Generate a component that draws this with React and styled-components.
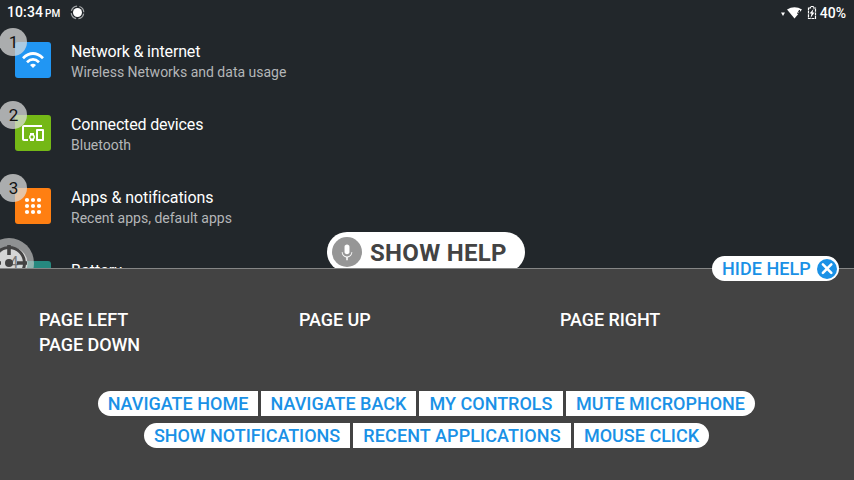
import React from "react";
import styled, { createGlobalStyle } from "styled-components";

const Global = createGlobalStyle`
  * { box-sizing: border-box; }
  body { margin: 0; background: #22272b; font-family: Roboto, sans-serif; overflow: hidden; }
  svg { display: block; }
`;

const Screen = styled.div`
  position: relative;
  width: 854px;
  height: 480px;
  display: flex;
  flex-direction: column;
  background: #22272b;
  color: #fff;
  overflow: hidden;
`;

const StatusBar = styled.header`
  height: 24px;
  flex: none;
  display: flex;
  align-items: center;
  justify-content: space-between;
  padding: 1px 8px 0 7px;
  font-size: 14px;
  font-weight: 500;
  line-height: 24px;
`;

const StatusGroup = styled.div`
  display: flex;
  align-items: center;
`;

const Clock = styled.span`
  margin-right: 10px;
  letter-spacing: 0.1px;
`;

const Meridiem = styled.span`
  font-size: 10px;
  margin-left: 2px;
`;

const Percent = styled.span`
  margin-left: 2px;
`;

const Settings = styled.main`
  height: 244px;
  flex: none;
  overflow: hidden;
`;

const SettingRow = styled.div`
  height: 73px;
  display: flex;
  padding: 18px 0 0 15px;
`;

const Tile = styled.div`
  position: relative;
  width: 36px;
  height: 36px;
  border-radius: 3px;
  background: ${(p) => p.$color};
  display: flex;
  align-items: center;
  justify-content: center;
`;

const Badge = styled.span`
  position: absolute;
  left: -16px;
  top: -14px;
  width: 28px;
  height: 28px;
  border-radius: 50%;
  background: rgba(220, 220, 220, 0.74);
  color: #111;
  font-size: 17px;
  line-height: 28px;
  text-align: center;
  padding-left: 1px;
`;

const RowText = styled.div`
  margin-left: 20px;
`;

const RowTitle = styled.div`
  font-size: 16px;
  line-height: 20px;
  letter-spacing: ${(p) => p.$tracking}px;
`;

const RowDetail = styled.div`
  font-size: 14px;
  line-height: 20px;
  color: #b4b6b8;
`;

const TargetBadge = styled.div`
  position: absolute;
  left: -31px;
  top: -23px;
`;

const ShowHelp = styled.button`
  position: absolute;
  left: 327px;
  top: 232px;
  width: 198px;
  height: 40px;
  border: 0;
  border-radius: 20px;
  background: #fff;
  color: #434343;
  display: flex;
  align-items: center;
  padding: 0 0 0 5px;
  font: 700 24px/40px Roboto, sans-serif;
  letter-spacing: 0.3px;
  white-space: nowrap;
`;

const ShowHelpLabel = styled.span`
  padding-top: 2px;
`;

const MicDisc = styled.span`
  width: 30px;
  height: 30px;
  border-radius: 50%;
  background: #969696;
  margin-right: 8px;
  display: flex;
  align-items: center;
  justify-content: center;
`;

const HelpPanel = styled.section`
  position: relative;
  flex: 1;
  border-top: 1px solid #858686;
  background: #434343;
  display: flex;
  flex-direction: column;
`;

const HideHelp = styled.button`
  position: absolute;
  left: 712px;
  top: -13px;
  width: 127px;
  height: 25px;
  border: 0;
  border-radius: 13px;
  background: #fff;
  color: #1a91e6;
  display: flex;
  align-items: center;
  justify-content: space-between;
  padding: 0 2px 0 10px;
  font: 500 18px/25px Roboto, sans-serif;
  letter-spacing: 0.05px;
  white-space: nowrap;
`;

const Commands = styled.div`
  display: grid;
  grid-template-columns: 260px 261px 1fr;
  grid-auto-rows: 25px;
  padding: 38px 0 0 39px;
  height: 122px;
  font-size: 18px;
  font-weight: 500;
  line-height: 26px;
  letter-spacing: -0.08px;
`;

const ActionRow = styled.div`
  display: flex;
  justify-content: center;
  gap: 3px;
  margin-bottom: 7px;
  padding-right: 1px;
`;

const Action = styled.button`
  width: ${(p) => p.$width}px;
  height: 25px;
  border: 0;
  padding: 0;
  background: #fff;
  color: #1a91e6;
  font: 500 18px/25px Roboto, sans-serif;
  letter-spacing: ${(p) => p.$tracking || 0}px;
  text-align: center;
  white-space: nowrap;
  &:first-child { border-radius: 13px 0 0 13px; }
  &:last-child { border-radius: 0 13px 13px 0; }
`;

const WifiIcon = () => (
  <svg width="24" height="24" viewBox="0 0 24 24" fill="none" stroke="#fff" strokeWidth="2.800">
    <path d="M2 10.200Q12 .9 22 10.200M6 14.200Q12 8.600 18 14.200" />
    <path d="M9 17q3-2.700 6 0l-3 3z" fill="#fff" stroke="none" />
  </svg>
);

const DevicesIcon = () => (
  <svg width="24" height="24" viewBox="0 0 24 24" fill="#fff">
    <path d="M3 6h18V4H3c-1.1 0-2 .9-2 2v12c0 1.100.9 2 2 2h4v-2H3V6zm10 6H9v1.780c-.61.55-1 1.330-1 2.220s.39 1.670 1 2.220V20h4v-1.780c.61-.55 1-1.340 1-2.220s-.39-1.670-1-2.220V12zm-2 5.500c-.83 0-1.500-.67-1.500-1.500s.67-1.500 1.500-1.500 1.500.67 1.500 1.500-.67 1.500-1.500 1.500zM22 8h-6c-.5 0-1 .5-1 1v10c0 .5.5 1 1 1h6c.5 0 1-.5 1-1V9c0-.5-.5-1-1-1zm-1 10h-4v-8h4v8z" />
  </svg>
);

const AppsIcon = () => (
  <svg width="24" height="24" viewBox="0 0 24 24" fill="#fff">
    {[6, 12, 18].map((y) => [6, 12, 18].map((x) => <circle key={x + "-" + y} cx={x} cy={y} r="2.100" />))}
  </svg>
);

const TargetIcon = () => (
  <svg width="50" height="50" viewBox="0 0 50 50">
    <circle cx="25" cy="25" r="25" fill="#c8c8c8" fillOpacity="0.66" />
    <circle cx="28" cy="25" r="15.500" fill="#e2e2e2" fillOpacity="0.85" />
    <text x="25.500" y="30" fill="#777" fontSize="16" fontFamily="Roboto">4</text>
    <circle cx="25" cy="25" r="15.500" fill="none" stroke="#434343" strokeWidth="3" />
    <path d="M25 7v10M25 33v10M7 25h10M33 25h10" stroke="#434343" strokeWidth="3.600" />
    <circle cx="25" cy="25" r="4" fill="#434343" />
  </svg>
);

const RecordIcon = () => (
  <svg width="15" height="15" viewBox="0 0 15 15" fill="none">
    <circle cx="7.500" cy="7.500" r="6.300" stroke="#a2a5a7" strokeWidth="1.200" strokeDasharray="7.500 2.396" strokeDashoffset="-1.200" />
    <circle cx="7.500" cy="7.500" r="4.500" fill="#fff" />
  </svg>
);

const SignalIcons = () => (
  <svg width="37" height="16" viewBox="0 0 37 16">
    <path d="M0 7.500h4L2 11z" fill="#fff" />
    <path d="M6 4.500Q13.500-.2 21 4.500L13.500 13.500z" fill="#fff" />
    <path d="M18.500 5l-2 3.500h3.500M18.500 5v6" stroke="#22272b" strokeWidth=".9" fill="none" />
    <path d="M27.500 3h2V1.500h3V3h2v10.500h-7z" fill="none" stroke="#fff" strokeWidth="1.200" strokeDasharray="3 .6" />
    <path d="M32.500 4l-4 4.500h2l-1 4.500 4-5.500h-2z" fill="#fff" />
  </svg>
);

const MicIcon = () => (
  <svg width="18" height="18" viewBox="0 0 24 24" fill="#fff">
    <path d="M12 15c1.900 0 3.300-1.340 3.300-3V5c0-1.660-1.400-3-3.300-3S8.700 3.340 8.700 5v7c0 1.660 1.400 3 3.300 3zm6-3c0 3.310-2.690 6-6 6s-6-2.690-6-6H5c0 3.800 2.600 6.700 6 7.200V23h2v-3.800c3.400-.5 6-3.400 6-7.200z" />
  </svg>
);

const CloseIcon = () => (
  <svg width="20" height="20" viewBox="0 0 20 20">
    <circle cx="10" cy="10" r="10" fill="#1a91e6" />
    <path d="M5.900 5.400l8.400 8.400M14.300 5.400l-8.400 8.400" stroke="#fff" strokeWidth="2.600" strokeLinecap="round" />
  </svg>
);

const settings = [
  { title: "Network & internet", detail: "Wireless Networks and data usage", color: "#2196f3", tracking: -0.16, icon: <WifiIcon /> },
  { title: "Connected devices", detail: "Bluetooth", color: "#74b816", tracking: -0.16, icon: <DevicesIcon /> },
  { title: "Apps & notifications", detail: "Recent apps, default apps", color: "#ff7f12", tracking: -0.05, icon: <AppsIcon /> },
  { title: "Battery", color: "#26897f", tracking: 0 },
];

const actionRows = [
  [["NAVIGATE HOME", 160], ["NAVIGATE BACK", 155], ["MY CONTROLS", 144], ["MUTE MICROPHONE", 189]],
  [["SHOW NOTIFICATIONS", 206, -0.04], ["RECENT APPLICATIONS", 218, 0.1], ["MOUSE CLICK", 135]],
];

export default function App() {
  return (
    <Screen>
      <Global />
      <StatusBar>
        <StatusGroup>
          <Clock>10:34<Meridiem>PM</Meridiem></Clock>
          <RecordIcon />
        </StatusGroup>
        <StatusGroup>
          <SignalIcons />
          <Percent>40%</Percent>
        </StatusGroup>
      </StatusBar>
      <Settings>
        {settings.map((s, i) => (
          <SettingRow key={s.title}>
            <Tile $color={s.color}>
              {s.icon}
              {s.icon ? <Badge>{i + 1}</Badge> : <TargetBadge><TargetIcon /></TargetBadge>}
            </Tile>
            <RowText>
              <RowTitle $tracking={s.tracking}>{s.title}</RowTitle>
              {s.detail && <RowDetail>{s.detail}</RowDetail>}
            </RowText>
          </SettingRow>
        ))}
      </Settings>
      <ShowHelp>
        <MicDisc><MicIcon /></MicDisc>
        <ShowHelpLabel>SHOW HELP</ShowHelpLabel>
      </ShowHelp>
      <HelpPanel>
        <HideHelp>HIDE HELP<CloseIcon /></HideHelp>
        <Commands>
          <span>PAGE LEFT</span>
          <span>PAGE UP</span>
          <span>PAGE RIGHT</span>
          <span>PAGE DOWN</span>
        </Commands>
        {actionRows.map((row, i) => (
          <ActionRow key={i}>
            {row.map(([label, width, tracking]) => (
              <Action key={label} $width={width} $tracking={tracking}>{label}</Action>
            ))}
          </ActionRow>
        ))}
      </HelpPanel>
    </Screen>
  );
}
